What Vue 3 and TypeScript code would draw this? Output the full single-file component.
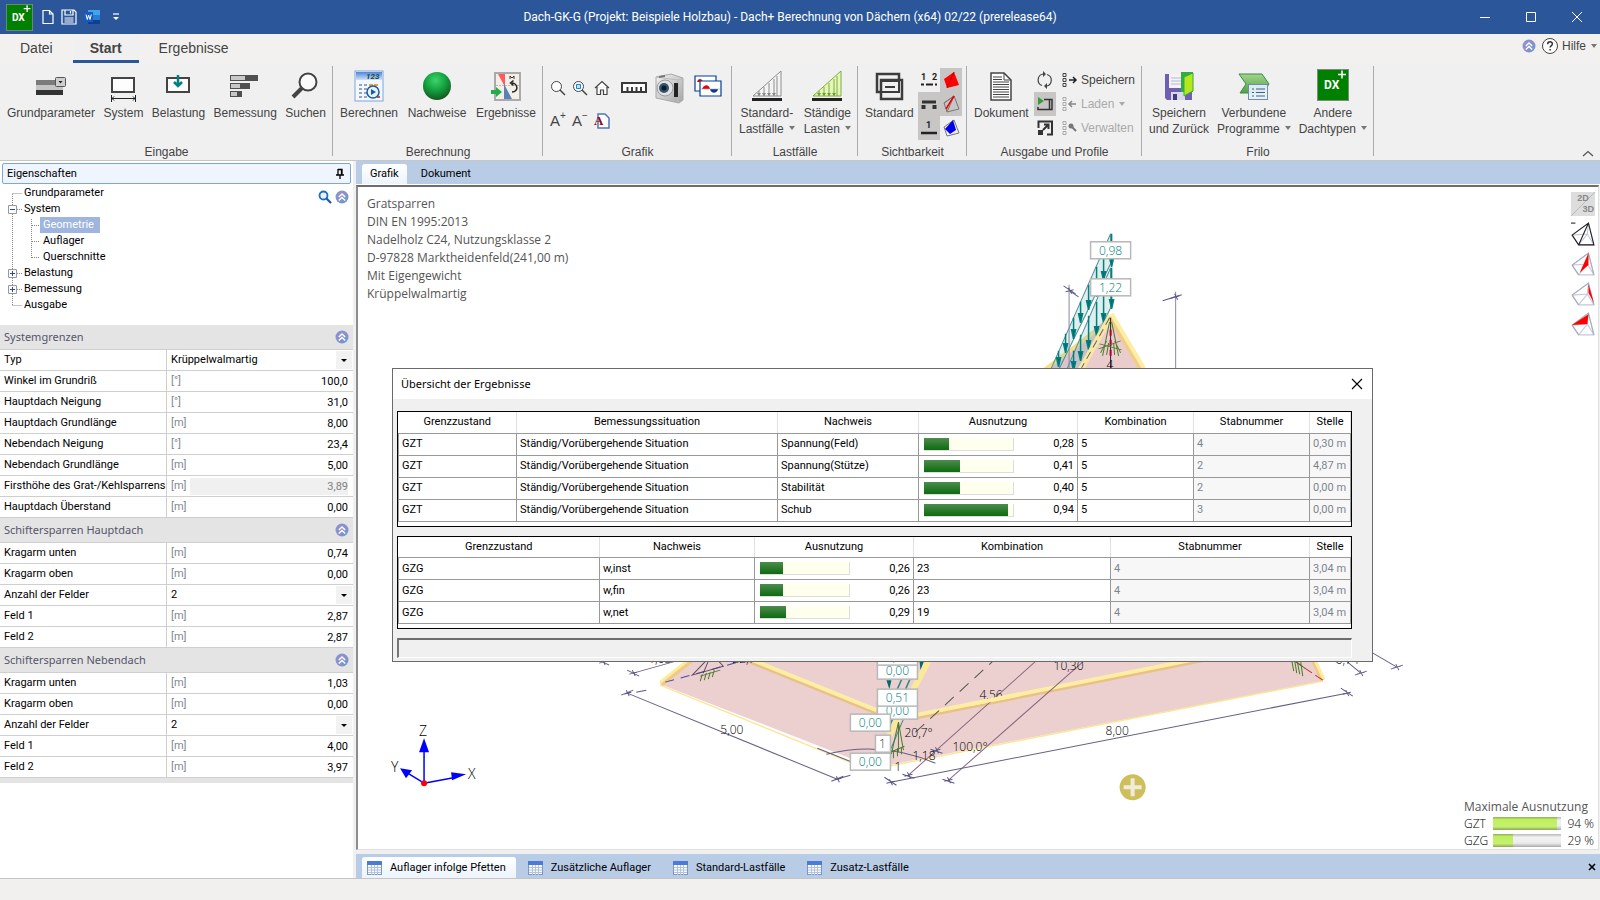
<script setup lang="ts">
import { ref } from 'vue'

interface Prop { label: string; unit?: string; value: string; kind?: 'select' | 'readonly' }
interface Section { title: string; rows: Prop[] }
interface Result { cells: string[]; use: number; combo: string; member: string; at: string }
interface Table { cls: string; heads: string[]; rows: Result[] }

const sections = ref<Section[]>([
  {
    title: 'Systemgrenzen',
    rows: [
      { label: 'Typ', value: 'Krüppelwalmartig', kind: 'select' },
      { label: 'Winkel im Grundriß', unit: '[°]', value: '100,0' },
      { label: 'Hauptdach Neigung', unit: '[°]', value: '31,0' },
      { label: 'Hauptdach Grundlänge', unit: '[m]', value: '8,00' },
      { label: 'Nebendach Neigung', unit: '[°]', value: '23,4' },
      { label: 'Nebendach Grundlänge', unit: '[m]', value: '5,00' },
      { label: 'Firsthöhe des Grat-/Kehlsparrens', unit: '[m]', value: '3,89', kind: 'readonly' },
      { label: 'Hauptdach Überstand', unit: '[m]', value: '0,00' },
    ],
  },
  {
    title: 'Schiftersparren Hauptdach',
    rows: [
      { label: 'Kragarm unten', unit: '[m]', value: '0,74' },
      { label: 'Kragarm oben', unit: '[m]', value: '0,00' },
      { label: 'Anzahl der Felder', value: '2', kind: 'select' },
      { label: 'Feld 1', unit: '[m]', value: '2,87' },
      { label: 'Feld 2', unit: '[m]', value: '2,87' },
    ],
  },
  {
    title: 'Schiftersparren Nebendach',
    rows: [
      { label: 'Kragarm unten', unit: '[m]', value: '1,03' },
      { label: 'Kragarm oben', unit: '[m]', value: '0,00' },
      { label: 'Anzahl der Felder', value: '2', kind: 'select' },
      { label: 'Feld 1', unit: '[m]', value: '4,00' },
      { label: 'Feld 2', unit: '[m]', value: '3,97' },
    ],
  },
])

const situation = 'Ständig/Vorübergehende Situation'
const tables: Table[] = [
  {
    cls: 'gzt',
    heads: ['Grenzzustand', 'Bemessungssituation', 'Nachweis', 'Ausnutzung', 'Kombination', 'Stabnummer', 'Stelle'],
    rows: [
      { cells: ['GZT', situation, 'Spannung(Feld)'], use: 0.28, combo: '5', member: '4', at: '0,30 m' },
      { cells: ['GZT', situation, 'Spannung(Stütze)'], use: 0.41, combo: '5', member: '2', at: '4,87 m' },
      { cells: ['GZT', situation, 'Stabilität'], use: 0.4, combo: '5', member: '2', at: '0,00 m' },
      { cells: ['GZT', situation, 'Schub'], use: 0.94, combo: '5', member: '3', at: '0,00 m' },
    ],
  },
  {
    cls: 'gzg',
    heads: ['Grenzzustand', 'Nachweis', 'Ausnutzung', 'Kombination', 'Stabnummer', 'Stelle'],
    rows: [
      { cells: ['GZG', 'w,inst'], use: 0.26, combo: '23', member: '4', at: '3,04 m' },
      { cells: ['GZG', 'w,fin'], use: 0.26, combo: '23', member: '4', at: '3,04 m' },
      { cells: ['GZG', 'w,net'], use: 0.29, combo: '19', member: '4', at: '3,04 m' },
    ],
  },
]
const fmt = (n: number): string => n.toFixed(2).replace('.', ',')

const info = ['Gratsparren', 'DIN EN 1995:2013', 'Nadelholz C24, Nutzungsklasse 2', 'D-97828 Marktheidenfeld(241,00 m)', 'Mit Eigengewicht', 'Krüppelwalmartig']
const bottomTabs = ['Auflager infolge Pfetten', 'Zusätzliche Auflager', 'Standard-Lastfälle', 'Zusatz-Lastfälle']
const limits = [{ name: 'GZT', pct: 94 }, { name: 'GZG', pct: 29 }]

// Load arrows: x, top, tip
const arrows: number[][] = [
  [1103, 252, 280], [1096, 267, 296], [1088, 285, 309], [1080, 302, 322], [1073, 318, 338], [1065, 334, 352], [1058, 351, 366],
  [1111, 234, 266], [1111, 268, 308], [1103, 284, 322], [1096, 302, 335], [1088, 316, 349], [1080, 335, 360], [1073, 351, 370],
]
const tags = [
  { x: 1090, y: 242, w: 40, t: '0,98' }, { x: 1090, y: 279, w: 40, t: '1,22' },
  { x: 877, y: 662, w: 40, t: '0,00' }, { x: 877, y: 648, w: 40, t: '0,63' },
  { x: 877, y: 702, w: 40, t: '0,00' }, { x: 877, y: 689, w: 40, t: '0,51' },
  { x: 850, y: 714, w: 40, t: '0,00' }, { x: 850, y: 753, w: 40, t: '0,00' },
]
// Dimension line ends: x, y and the slope of the tick
const ticks: number[][] = [[1069, 291, 5], [1175, 297, -2], [603, 662, 3], [633, 673, 3], [627, 693, -3], [837, 779, -3], [890, 782, 5], [908, 775, 1], [948, 780, 1], [936, 750, 1], [1346, 693, 5], [1360, 673, -2], [1396, 667, -2]]
const viewIcons = ['', 'M16 1 8 19l8-7z', 'M16 2l0 8 5 9z', 'M16 2 1 12l14-1z']
</script>

<template>
  <div class="app">
    <svg class="defs" aria-hidden="true">
      <defs>
        <linearGradient id="gBlue" x1="0" y1="0" x2="0" y2="1"><stop offset="0" stop-color="#4f86d8" /><stop offset="1" stop-color="#cfe2f8" /></linearGradient>
        <linearGradient id="gChevron" x1="0" y1="0" x2="1" y2="1"><stop offset="0" stop-color="#8d94d6" /><stop offset=".6" stop-color="#8a90c8" /><stop offset="1" stop-color="#4fa3dc" /></linearGradient>
        <radialGradient id="gBall" cx=".45" cy=".3" r=".75"><stop offset="0" stop-color="#3fd46c" /><stop offset=".5" stop-color="#11a03e" /><stop offset="1" stop-color="#1c4a1c" /></radialGradient>
        <linearGradient id="gGreen" x1="0" y1="0" x2="0" y2="1"><stop offset="0" stop-color="#a3d58a" /><stop offset="1" stop-color="#4fa04b" /></linearGradient>
        <linearGradient id="gCam" x1="0" y1="0" x2="1" y2="1"><stop offset="0" stop-color="#f4f4f4" /><stop offset="1" stop-color="#a5a5a5" /></linearGradient>
      </defs>
      <symbol id="chev" viewBox="0 0 14 14"><circle cx="7" cy="7" r="6.5" fill="url(#gChevron)" /><path d="M3.800 7 7 4l3.200 3M3.800 10.500 7 7.500l3.200 3" fill="none" stroke="#fff" stroke-width="1.400" /></symbol>
      <symbol id="grid" viewBox="0 0 15 14"><rect x=".5" y=".5" width="14" height="13" fill="#f7faff" stroke="#7d97c4" /><path d="M0 0h15v4H0z" fill="#4a7bd6" /><path d="M4.500 4v10M7.500 4v10M10.500 4v10M1 6.500h13M1 9h13M1 11.500h13" stroke="#b4c2dc" /></symbol>
      <symbol id="list" viewBox="0 0 14 14"><path d="M1 .5h3v3H1zM1 5.500h3v3H1zM1 10.500h3v3H1z" fill="none" stroke="currentColor" /></symbol>
    </svg>

    <header class="titlebar">
      <div class="quick">
        <svg class="appicon" viewBox="0 0 32 32"><rect x=".5" y=".5" width="31" height="31" fill="#008000" stroke="#7c8c7c" /><text x="7" y="20" class="dx">DX</text><path d="M25 1.500v8M21 5.500h8" stroke="#fff" stroke-width="1.500" /></svg>
        <button aria-label="Neu"><svg width="12" height="16" viewBox="0 0 12 16"><path d="M1 1.500h6.500l3.500 3.500v9.500H1zM7.500 1.500V5H11" fill="none" stroke="#fff" stroke-width="1.200" /></svg></button>
        <button aria-label="Speichern"><svg width="16" height="16" viewBox="0 0 16 16"><path d="M1 1h12l2 2v12H1zM4 1v5h8V1M9.500 2v2.500M3.500 9h9M3.500 11h9M3.500 13h9" fill="none" stroke="#fff" stroke-width="1.200" /></svg></button>
        <button aria-label="Word"><svg width="16" height="16" viewBox="0 0 16 16"><path d="M4 1h12v5H4z" fill="#41a5ee" /><path d="M4 6h12v5H4z" fill="#2b7cd3" /><path d="M4 11h12v4H4z" fill="#103f91" /><path d="M0 3h9v10H0z" fill="#185abd" /><path d="m2 5.500 1.300 5L4.600 6l1.400 4.500 1.300-5" fill="none" stroke="#fff" /></svg></button>
        <button class="more" aria-label="Anpassen"><svg width="8" height="8" viewBox="0 0 8 8"><path d="M1 1h6" stroke="#fff" stroke-width="1.200" /><path d="M1 4h6L4 7z" fill="#fff" /></svg></button>
      </div>
      <h1>Dach-GK-G (Projekt: Beispiele Holzbau) - Dach+ Berechnung von Dächern (x64) 02/22 (prerelease64)</h1>
      <div class="winbtns">
        <button aria-label="Minimieren"><svg viewBox="0 0 12 12"><path d="M1 6.500h10" /></svg></button>
        <button aria-label="Maximieren"><svg viewBox="0 0 12 12"><path d="M1.500 1.500h9v9h-9z" /></svg></button>
        <button aria-label="Schließen"><svg viewBox="0 0 12 12"><path d="m1 1 10 10M11 1 1 11" /></svg></button>
      </div>
    </header>

    <nav class="menu">
      <button>Datei</button><button class="on">Start</button><button>Ergebnisse</button>
      <div class="help">
        <svg width="14" height="14"><use href="#chev" /></svg>
        <button><svg width="18" height="18" viewBox="0 0 18 18"><circle cx="9" cy="9" r="7.500" fill="#fff" stroke="#444" /><path d="M6.700 7.200c0-3.300 4.800-3.100 4.700-.2 0 1.600-2.300 1.700-2.300 3.600M9.100 12v1.600" fill="none" stroke="#333" stroke-width="1.500" /></svg>Hilfe<i class="caret"></i></button>
      </div>
    </nav>

    <div class="ribbon">
      <section class="g g1">
        <div class="tools">
          <button class="big"><svg viewBox="0 0 32 32"><path d="M1 11h27v5H1z" fill="#7b7b7b" /><path d="M1 16h27v5H1z" fill="#c4c4c4" /><path d="M1 21h27v5H1z" fill="#333" /><rect x="20.500" y="8.500" width="10" height="9" rx="1" fill="#cfcfcf" stroke="#555" /><path d="M23.500 12h4l-2 2.500z" fill="#222" /></svg>Grundparameter</button>
          <button class="big"><svg viewBox="0 0 32 32"><path d="M5 9h22v14H5z" fill="#fdfdfd" stroke="#444" stroke-width="2" /><path d="M4 29.500h25M4.500 26v7M28.500 26v7M7 27.500l-2 2 2 2M26 27.500l2 2-2 2" fill="none" stroke="#222" /></svg>System</button>
          <button class="big"><svg viewBox="0 0 32 32"><path d="M5 9h22v14H5z" fill="#fdfdfd" stroke="#444" stroke-width="2" /><path d="M16 6v11M12 13l4 4 4-4" fill="none" stroke="#008080" stroke-width="2.500" /></svg>Belastung</button>
          <button class="big"><svg viewBox="0 0 32 32"><path d="M1 6h28v6H1zM1 14h20v6H1zM1 22h12v6H1z" fill="#505050" /><path d="M2 7h14v4H2zM2 15h9v4H2zM2 23h6v4H2z" fill="#c8c8c8" /></svg>Bemessung</button>
          <button class="big"><svg viewBox="0 0 32 32"><circle cx="18" cy="13" r="8.500" fill="#fafafa" stroke="#444" stroke-width="2" /><path d="m12 19-9 9" stroke="#444" stroke-width="4" /></svg>Suchen</button>
        </div><h2>Eingabe</h2>
      </section>
      <section class="g g2">
        <div class="tools">
          <button class="big"><svg viewBox="0 0 32 32"><rect x="2" y="2" width="28" height="30" fill="#f3f8ff" stroke="#7fa5da" /><path d="M3 3h26v8H3z" fill="url(#gBlue)" /><text x="13" y="10" font-size="8" font-style="italic" font-weight="700" fill="#244" font-family="Roboto, sans-serif">123</text><path d="M6 15h3v2H6zm5 0h3v2h-3zM6 19h3v2H6zm5 0h3v2h-3zM6 23h3v2H6zm5 0h3v2h-3zM6 27h3v2H6zm5 0h3v2h-3z" fill="#94a5c4" /><path d="M16 15h4v2h-4zm5 0h4v2h-4z" fill="#e5a345" /><path d="M24 27h3v2h-3z" fill="#d8543a" /><circle cx="20" cy="23" r="6" fill="#e6f1fc" stroke="#1a5c9e" stroke-width="1.500" /><path d="m18 20 5 3-5 3z" fill="#1a5c9e" /></svg>Berechnen</button>
          <button class="big"><svg viewBox="0 0 32 32"><circle cx="16" cy="17" r="14" fill="url(#gBall)" /></svg>Nachweise</button>
          <button class="big"><svg viewBox="0 0 32 32"><rect x="5" y="4" width="25" height="27" fill="#f3efe6" stroke="#aaa" stroke-width="2" /><path d="M8 5h7v13z" fill="#ff5a5f" /><path d="M14 15v15h8z" fill="#5b82b5" /><path d="M6 16.500h23" stroke="#bbb" stroke-dasharray="2 1" /><path d="M22 23c7 0 6-9 0-9M23.500 11.500l-3 2.500 3 2.500" fill="none" stroke="#222" stroke-width="1.500" /><path d="M20 10V7l2 2 2-2v3" fill="none" stroke="#333" /><path d="M1 21h5v-3l6 5-6 5v-3H1z" fill="#22ad4a" /></svg>Ergebnisse</button>
        </div><h2>Berechnung</h2>
      </section>
      <section class="g g3">
        <div class="gfx">
          <div class="gfxrow">
            <button aria-label="Zoom"><svg width="16" height="16" viewBox="0 0 16 16"><circle cx="6.500" cy="6.500" r="5" fill="#fff" stroke="#444" /><path d="m10 10 5 5" stroke="#444" stroke-width="1.500" /></svg></button>
            <button aria-label="Ausschnitt"><svg width="16" height="16" viewBox="0 0 16 16"><circle cx="6.500" cy="6.500" r="5" fill="#fff" stroke="#444" /><path d="M4.500 4.500h4v4h-4z" fill="#bfe2ff" stroke="#1684cf" /><path d="m10 10 5 5" stroke="#444" stroke-width="1.500" /></svg></button>
            <button aria-label="Gesamtansicht"><svg width="16" height="16" viewBox="0 0 16 16"><path d="M1 8 8 1.500 15 8M3 7v7.500h3.500V10h3v4.500H13V7" fill="#fff" stroke="#444" stroke-width="1.200" /></svg></button>
            <button class="ruler" aria-label="Maßlinien"><svg width="28" height="14" viewBox="0 0 28 14"><path d="M2 2h24v9H2z" fill="#fff" stroke="#3a3a3a" stroke-width="2" /><path d="M7.500 6v5M12 6v5M16.500 6v5M21 6v5" stroke="#3a3a3a" stroke-width="2" /></svg></button>
            <button aria-label="Kamera"><svg width="32" height="32" viewBox="0 0 32 32"><path d="M2 5 17 2l12 4v22l-4 3L2 26z" fill="url(#gCam)" stroke="#aaa" /><path d="M2 5 24 8v22M24 8l5-2" fill="none" stroke="#bbb" /><path d="m5 4 6-1v2L5 6z" fill="#777" /><circle cx="11" cy="16" r="8" fill="#e2e2e2" stroke="#999" /><circle cx="10" cy="16" r="5" fill="#35556e" /><circle cx="10" cy="16" r="2.500" fill="#0b1a28" /><path d="M20 11h4v14h-4z" fill="#222" /></svg></button>
            <button class="pics" aria-label="Bilder"><svg width="28" height="22" viewBox="0 0 28 22"><path d="M1 1h21v15H1z" fill="#fff" stroke="#063c96" stroke-width="1.200" /><path d="M3 7c1-4 5-4 6 0z" fill="#e00" /><path d="M6 6h21v15H6z" fill="#fff" stroke="#063c96" stroke-width="1.200" /><path d="M8 14c2-5 7-5 8 0z" fill="#e00" /><path d="M16 14c1 5 7 5 8 0z" fill="#063c96" /><path d="M7 14h19" stroke="#aaa" stroke-width=".6" /></svg></button>
          </div>
          <div class="gfxrow low">
            <button class="fs">A<sup>+</sup></button><button class="fs">A<sup>−</sup></button>
            <button aria-label="Schrift"><svg width="16" height="16" viewBox="0 0 16 16"><path d="M4 1h7l4 4v10H4z" fill="#fff" stroke="#5274b5" stroke-width="1.500" /><text x="0" y="12" font-size="13" font-weight="700" font-family="'Liberation Serif', serif" fill="#8b0a14">A</text></svg></button>
          </div>
        </div><h2>Grafik</h2>
      </section>
      <section class="g g4">
        <div class="tools">
          <button class="big"><svg viewBox="0 0 32 32"><path d="M2 27 30 2v25zM8 22v5M13 18v9M18 14v13M23 10v17M26 7v20" fill="#f3f3f3" stroke="#8d8d8d" /><path d="M1 29h30v3H1z" fill="#222" /><path d="m6 24 2 3 2-3zm5 0 2 3 2-3zm5 0 2 3 2-3zm5 0 2 3 2-3z" fill="#888" /></svg>Standard-<span>Lastfälle<i class="caret"></i></span></button>
          <button class="big"><svg viewBox="0 0 32 32"><path d="M2 27 30 2v25zM8 22v5M13 18v9M18 14v13M23 10v17M26 7v20" fill="#e4f7b8" stroke="#7fae3e" /><path d="M1 29h30v3H1z" fill="#222" /><path d="m6 24 2 3 2-3zm5 0 2 3 2-3zm5 0 2 3 2-3zm5 0 2 3 2-3z" fill="#6e9b34" /></svg>Ständige<span>Lasten<i class="caret"></i></span></button>
        </div><h2>Lastfälle</h2>
      </section>
      <section class="g g5">
        <div class="tools">
          <button class="big"><svg viewBox="0 0 32 32"><path d="M4 5h22v18H4z" fill="none" stroke="#3c3c3c" stroke-width="2.500" /><path d="M8 11h21v19H8z" fill="#f0f0f0" stroke="#3c3c3c" stroke-width="2.500" /><path d="M8 12h18v11H8z" fill="none" stroke="#3c3c3c" stroke-width="2" /><path d="M12 18h10" stroke="#3c3c3c" stroke-width="2" /></svg>Standard</button>
          <div class="toggles">
            <button aria-label="Nummern"><svg viewBox="0 0 22 22"><text x="3" y="11" font-size="9" font-weight="700" font-family="Roboto, sans-serif" fill="#222">1</text><text x="14" y="11" font-size="9" font-weight="700" font-family="Roboto, sans-serif" fill="#222">2</text><path d="M3 15.500h3m2 0h7m2 0h2" stroke="#222" stroke-width="2" /></svg></button>
            <button class="on" aria-label="Dachfläche"><svg viewBox="0 0 22 22"><path d="M4 10 14 3l5 13-12 3z" fill="#f00" /><path d="m14 3-7 16" stroke="#b00" /></svg></button>
            <button class="on" aria-label="Auflager"><svg viewBox="0 0 22 22"><path d="M4 9h14" stroke="#333" stroke-width="3" /><path d="M3.500 12v4h4v-4zM14.500 12v4h4v-4z" fill="#333" /></svg></button>
            <button class="on" aria-label="Drahtmodell"><svg viewBox="0 0 22 22"><path d="M4 10 14 3l5 13-12 3zM4 10l10-7M7 19l7-16" fill="none" stroke="#777" /><path d="M14 3 6 16" stroke="#e00" stroke-width="1.500" /></svg></button>
            <button class="on" aria-label="Stabnummer"><svg viewBox="0 0 22 22"><text x="8" y="11" font-size="9" font-weight="700" font-family="Roboto, sans-serif" fill="#222">1</text><path d="M3 16h16" stroke="#222" stroke-width="2.500" /></svg></button>
            <button aria-label="Schnitt"><svg viewBox="0 0 22 22"><path d="M4 10 14 3l5 13-12 3z" fill="none" stroke="#777" /><path d="M13 3 5 12l5 5 6-4z" fill="#00e" /></svg></button>
          </div>
        </div><h2>Sichtbarkeit</h2>
      </section>
      <section class="g g6">
        <div class="tools">
          <button class="big"><svg viewBox="0 0 32 32"><path d="M6 4h13l7 7v20H6z" fill="#fff" stroke="#444" stroke-width="1.500" /><path d="M19 4v7h7M8 8h9M8 10.500h9M8 13h16M8 15.500h16M8 18h16M8 20.500h16M8 23h16M8 25.500h16M8 28h16" fill="none" stroke="#444" /></svg>Dokument</button>
          <div class="minis">
            <button aria-label="Aktualisieren"><svg viewBox="0 0 22 22"><path d="M8 16.500A6 6 0 0 1 9 5M13 5.500A6 6 0 0 1 13 17" fill="none" stroke="#444" stroke-width="1.200" /><path d="m9 2 3 3-3 3zM13 14l-3 3 3 3z" fill="#444" /></svg></button>
            <button class="on" aria-label="Ausgabe"><svg viewBox="0 0 22 22"><path d="M10 6.500h8v10H4V14M15.500 7v9" fill="none" stroke="#333" stroke-width="1.500" /><path d="M4 4v8l6-4z" fill="#3a9a3a" /></svg></button>
            <button aria-label="Maximieren"><svg viewBox="0 0 22 22"><path d="M4.500 11V4.500H18v13h-5" fill="none" stroke="#333" stroke-width="2" /><path d="M4 13h5v5H4z" fill="#333" /><path d="m9 13 5-5M10 7.500h4.500V12" fill="none" stroke="#333" stroke-width="2" /></svg></button>
          </div>
          <div class="profiles">
            <button><svg viewBox="0 0 16 16"><use href="#list" width="14" height="14" y="1" /><path d="M7 8h7M11 5l3 3-3 3" fill="none" stroke="#222" stroke-width="1.500" /></svg>Speichern</button>
            <button disabled><svg viewBox="0 0 16 16"><use href="#list" width="14" height="14" y="1" /><path d="M14 8H7M10 5 7 8l3 3" fill="none" stroke="#888" stroke-width="1.500" /></svg>Laden<i class="caret"></i></button>
            <button disabled><svg viewBox="0 0 16 16"><use href="#list" width="14" height="14" y="1" /><path d="M9 6l5 5" stroke="#777" stroke-width="2" /><circle cx="9" cy="6" r="2.500" fill="#777" /></svg>Verwalten</button>
          </div>
        </div><h2>Ausgabe und Profile</h2>
      </section>
      <section class="g g7">
        <div class="tools">
          <button class="big"><svg viewBox="0 0 32 32"><path d="M2 5h27v26H4l-2-2z" fill="#6f5fb0" /><path d="M6 5h17v14H6z" fill="#f2f2f8" /><path d="M8 9h13M8 12h13M8 15h13" stroke="#b9b9cc" /><path d="M8 23h14v8H8z" fill="#d8d8e8" /><path d="M10 25h4v6h-4z" fill="#453a80" /><path d="M18 3h12v20H18z" fill="#2fae3d" /><path d="m21 8 9-4v18l-9 5z" fill="#b6e61d" stroke="#2fae3d" /></svg>Speichern<span>und Zurück</span></button>
          <button class="big"><svg viewBox="0 0 32 32"><path d="M1 5h23l7 10-6 9H2l6-9z" fill="url(#gGreen)" stroke="#3d8a45" /><rect x="10.500" y="15.500" width="19" height="15" fill="#e8f1fa" fill-opacity=".92" stroke="#6d8db8" /><path d="M14 20h2m2 0h9M14 23.500h2m2 0h9M14 27h2m2 0h9" stroke="#3e5f94" /></svg>Verbundene<span>Programme<i class="caret"></i></span></button>
          <button class="big"><svg viewBox="0 0 32 32"><rect x=".5" y=".5" width="31" height="31" fill="#008000" stroke="#7c8c7c" /><text x="7" y="20" class="dx">DX</text><path d="M25 1.500v8M21 5.500h8" stroke="#fff" stroke-width="1.500" /></svg>Andere<span>Dachtypen<i class="caret"></i></span></button>
        </div><h2>Frilo</h2>
      </section>
      <button class="collapse" aria-label="Menüband einklappen"><svg width="12" height="7" viewBox="0 0 12 7"><path d="m1 6 5-4.500L11 6" fill="none" stroke="#555" stroke-width="1.300" /></svg></button>
    </div>

    <main class="work">
      <aside class="side">
        <div class="panelhead">Eigenschaften<svg width="10" height="12" viewBox="0 0 10 12"><path d="M3 1.500h4V7M3 1v6M6.500 1v6M1 7h8M5 7v4" fill="none" stroke="#000" stroke-width="1.300" /></svg></div>
        <div class="treebox">
          <svg class="lines" width="44" height="128" viewBox="0 0 44 128" aria-hidden="true">
            <path d="M12.500 9v112M12.500 8.500H22M17 24.500h5M31.500 34v39M32 40.500h8M32 56.500h8M32 72.500h8M17 88.500h5M17 104.500h5M12.500 120.500H22" fill="none" stroke="#888" stroke-dasharray="1 1" />
            <path d="M8.500 20.500h8v8h-8zM8.500 84.500h8v8h-8zM8.500 100.500h8v8h-8z" fill="#fafafa" stroke="#999" />
            <path d="M10 24.500h5M10 88.500h5M12.500 86v5M10 104.500h5M12.500 102v5" stroke="#2a4a9a" />
          </svg>
          <ul class="tree">
            <li>Grundparameter</li><li>System
              <ul><li><span class="sel">Geometrie</span></li><li>Auflager</li><li>Querschnitte</li></ul></li>
            <li>Belastung</li><li>Bemessung</li><li>Ausgabe</li>
          </ul>
          <div class="treeicons">
            <svg width="14" height="14" viewBox="0 0 14 14"><circle cx="5.500" cy="5.500" r="4" fill="#e4f4fc" stroke="#1f6dbb" stroke-width="1.800" /><path d="m8.500 8.500 4.500 4.500" stroke="#1f5a9e" stroke-width="2.200" /></svg>
            <svg width="14" height="14"><use href="#chev" /></svg>
          </div>
        </div>
        <section v-for="(s, si) in sections" :key="s.title" class="props">
          <h3>{{ s.title }}<svg width="14" height="14"><use href="#chev" /></svg></h3>
          <div v-for="(r, ri) in s.rows" :key="ri" class="prop">
            <label :for="`p${si}-${ri}`">{{ r.label }}</label>
            <div class="val">
              <template v-if="r.kind === 'select'">
                <select :id="`p${si}-${ri}`"><option>{{ r.value }}</option></select>
                <span class="drop"></span>
              </template>
              <template v-else>
                <span class="unit">{{ r.unit }}</span>
                <input :id="`p${si}-${ri}`" v-model="r.value" :readonly="r.kind === 'readonly'" type="text">
              </template>
            </div>
          </div>
        </section>
        <div class="strip"></div>
      </aside>

      <div class="view">
        <div class="tabs top"><button class="on">Grafik</button><button>Dokument</button></div>
        <div class="canvas">
          <svg class="drawing" viewBox="358 187 1239 662" preserveAspectRatio="xMidYMid slice">
            <!-- roof faces -->
            <path d="M660 684 700 654h612l10 27-434 84-28-3z" fill="#ecd0d0" />
            <path d="M1110 316 1142 370h-98l50-38z" fill="#ebcccc" />
            <path d="M1110 316 1044 370h36z" fill="#ddc3cb" />
            <path d="M1044 370 1094 332" stroke="#f6dd8a" stroke-width="4" />
            <g fill="#7fbfbb" fill-opacity=".25" stroke="#4a8f92">
              <path d="M1110 234 1050 370h8l52-106z" /><path d="M1110 268 1066 370h14l30-62z" />
            </g>
            <g stroke="#008080" stroke-width="1.500" fill="#006b6b">
              <path v-for="(a, i) in arrows" :key="i" :d="`M${a[0]} ${a[1]}V${a[2] - 8}m-2 0h4l-2 9z`" />
            </g>
            <path d="M1110 316 1080 370" stroke="#fbe7a1" stroke-width="6" />
            <path d="M1110 317 1143 372" stroke="#f0cd86" stroke-width="6" />
            <path d="M1111 314 1143 368" stroke="#fdeea4" stroke-width="4" />
            <path d="m1109 318-28 50" stroke="#567" stroke-dasharray="8 5" />
            <path d="M1110 318v52" stroke="#222" /><path d="M1110 330v30" stroke="#b00035" stroke-width="2" stroke-dasharray="6 4" />
            <path d="m1109 322-7 34M1111 322l7 34M1099 344l22 6M1098 349l22-8M1100 353l6-12M1106 355l2-12M1114 355l-1-12M1120 353l-6-12" fill="none" stroke="#4d7a2e" />
            <text x="1106" y="369" font-size="12">4</text>
            <!-- lower eaves -->
            <path d="M660 685 852 763M888 766l434-85" stroke="#fbe69b" stroke-width="1.500" />
            <path d="M661 684 700 653M1322 680l-14-30" stroke="#f0c983" stroke-width="5" />
            <path d="M660 682 698 652M1323 679l-14-30" stroke="#fdeb9e" stroke-width="3" />
            <path d="m745 659 131 53M915 717l300-60" stroke="#e8c284" stroke-width="5" />
            <path d="m745 657 131 53M915 715l300-60" stroke="#fdeea4" stroke-width="4" />
            <g stroke="#675f80" fill="none">
              <path d="M817 748 852 762" />
              <path d="M826 754q56-14 109 9" />
              <path d="M908 775 1042 655M948 780 1090 655" stroke="#8a6680" />
              <path d="M627 693 837 779M890 782 1346 693M633 673 690 657M1350 640 1396 667M1330 648 1360 673M1335 662l9-2" />
              <path d="M1068.500 285v90M1175 292v80" stroke="#8886ab" />
            </g>
            <path d="M915 732 1000 654" stroke="#555" stroke-dasharray="12 8" />
            <path d="M665 682 760 656" stroke="#4a46b4" stroke-dasharray="9 7" />
            <path d="M1322 680 1292 660" stroke="#b33" stroke-dasharray="9 4" />
            <g fill="none">
              <path d="M692 675 712 654l11 12zM703 673l8-19" stroke="#5b4a67" />
              <path d="m700 676 20-6M702 674l-2 7m6-8-2 7m6-8-2 7m6-9-2 7M1290 655l3 16m0-16 3 18m0-14 3 15m1-12 2 14M1288 656l16 12" stroke="#4d7a2e" />
            </g>
            <path d="M884 764 930 655" stroke="#3a8a8a" /><path d="M889 735 931 655" stroke="#fbe99a" stroke-width="6" />
            <path d="M884 718 912 655M889 726 920 655" stroke="#2a8a8a" stroke-width="1.500" /><path d="m886 680 5 0-2 9zM919 660l5 0-4 10z" fill="#006b6b" />
            <path d="m898 722-7 32M898 722l5 28M898 722v30M890 752l14-6M893 750v8m4-10v8m4-9v7" fill="none" stroke="#4d7a2e" />
            <g stroke="#5a5888"><path v-for="(t, i) in ticks" :key="i" :d="`M${t[0] - 6} ${t[1] + (t[2] < 0 ? 2 : -t[2])}L${t[0] + 6} ${t[1] + (t[2] < 0 ? t[2] : 3)}M${t[0] - 4} ${t[1] + 1}l8-2m-5-2 3 6`" /></g>
            <path d="m1069 291 9 6M1162 301l16-5M646 690l-10 2M836 779l14-4" stroke="#5a5888" />
            <g font-size="12" class="dim">
              <text x="720" y="734">5,00</text><text x="1105" y="735">8,00</text><text x="904" y="737">20,7°</text><text x="952" y="751">100,0°</text>
              <text x="912" y="760">1,18</text><text x="979" y="699">4,56</text><text x="1053" y="670">10,30</text><text x="648" y="663">1,03</text>
              <text x="732" y="663">22,7</text><text x="1335" y="664">0,74</text><text x="894" y="771">1</text>
            </g>
            <path d="m970 704 50-10" stroke="#fdeea4" stroke-width="4" />
            <g class="tag">
              <template v-for="(t, i) in tags" :key="i">
                <rect :x="t.x" :y="t.y" :width="t.w" height="17" /><text :x="t.x + t.w / 2" :y="t.y + 13">{{ t.t }}</text>
              </template>
              <rect x="875" y="735" width="15" height="17" /><text x="882" y="748" class="dark">1</text>
            </g>
            <!-- coordinate axes -->
            <path d="M424 783V750M424 783l-18-11M424 783l32-6" stroke="#00f" stroke-width="1.500" />
            <path d="m424 738 5 14h-10zM400 768l12 2-6 8zM466 774l-14 6-1-8z" fill="#00f" /><circle cx="424" cy="783" r="3" fill="#f00" />
            <g font-size="14" class="dim"><text x="419" y="736">Z</text><text x="391" y="772">Y</text><text x="468" y="779">X</text></g>
            <circle cx="1132" cy="787" r="13" fill="#cfbf5c" /><path d="M1132 778v18M1123 787h18" stroke="#f0ecdc" stroke-width="4" />
          </svg>
          <div class="info"><p v-for="l in info" :key="l">{{ l }}</p></div>
          <div class="viewtools">
            <button class="flat"><span>2D</span><span>3D</span></button>
            <button v-for="(d, i) in viewIcons" :key="i" :aria-label="`Ansicht ${i + 1}`"><svg viewBox="0 0 22 22"><path d="M1 12 16 1l5 20H7zM1 12l14-1 6 10M7 21 15 11l1-10" fill="none" stroke="#c4c8dc" /><path v-if="!d" d="M1 12 16 1l5 20H7zM16 1 7 21" fill="none" stroke="#222" /><path v-else d="M1 12 16 1l5 20M1 12l6 9" fill="none" stroke="#aab" /><path v-if="d" :d="d" fill="#f00" /><path v-else d="M0 1h4" stroke="#222" /></svg></button>
          </div>
          <div class="usage">
            <p>Maximale Ausnutzung</p>
            <div v-for="l in limits" :key="l.name" class="limit"><span>{{ l.name }}</span><div class="meter"><div :style="{ width: l.pct + '%' }"></div></div><span class="pct">{{ l.pct }} %</span></div>
          </div>
        </div>
        <div class="tabs bottom">
          <button v-for="(t, i) in bottomTabs" :key="t" :class="{ on: i === 0 }"><svg width="15" height="14"><use href="#grid" /></svg>{{ t }}</button>
          <button class="x" aria-label="Schließen"><svg width="8" height="8" viewBox="0 0 8 8"><path d="m1 1 6 6M7 1 1 7" stroke="#000" stroke-width="1.600" /></svg></button>
        </div>
      </div>
    </main>
    <footer class="status"></footer>

    <div class="dialog" role="dialog" aria-labelledby="dlg">
      <div class="dhead"><h2 id="dlg">Übersicht der Ergebnisse</h2><button aria-label="Schließen"><svg width="12" height="12" viewBox="0 0 12 12"><path d="m1 1 10 10M11 1 1 11" stroke="#000" stroke-width="1.100" /></svg></button></div>
      <div class="dbody">
        <div v-for="t in tables" :key="t.cls" class="frame">
          <table :class="t.cls">
            <thead><tr><th v-for="h in t.heads" :key="h" scope="col">{{ h }}</th></tr></thead>
            <tbody>
              <tr v-for="(r, i) in t.rows" :key="i">
                <td v-for="(c, j) in r.cells" :key="j">{{ c }}</td>
                <td><div class="use"><div class="bar"><div :style="{ width: r.use * 100 + '%' }"></div></div><span>{{ fmt(r.use) }}</span></div></td>
                <td>{{ r.combo }}</td><td class="off">{{ r.member }}</td><td class="off">{{ r.at }}</td>
              </tr>
            </tbody>
          </table>
        </div>
        <div class="sunken"></div>
      </div>
    </div>
  </div>
</template>

<style>
body { margin: 0; }
</style>

<style scoped>
.app { position: relative; display: flex; flex-direction: column; height: 100vh; min-width: 1400px; overflow: hidden; background: #f0f0f0; color: #000; font: 11px/16px Roboto, "Liberation Sans", sans-serif; }
.app *, .app *::before { box-sizing: border-box; }
button, input, select { font: inherit; color: inherit; border: 0; padding: 0; margin: 0; background: none; }
h1, h2, h3, p, ul { margin: 0; padding: 0; font-weight: 400; font-size: inherit; }
svg { display: block; flex: none; }
.defs { position: absolute; width: 0; height: 0; }
.dx { font: 700 12px Roboto, sans-serif; fill: #fff; }
.caret { display: inline-block; border: 3px solid transparent; border-top: 4px solid #777; border-bottom: 0; margin-left: 5px; vertical-align: 3px; }

.titlebar { display: grid; grid-template-columns: 1fr auto 1fr; align-items: center; height: 34px; flex: none; background: #2b579a; color: #fff; }
.titlebar h1 { font: 12px/16px Roboto, sans-serif; margin-right: 20px; }
.quick { display: flex; align-items: center; gap: 7px; padding-left: 6px; }
.quick button { display: flex; }
.quick .more { margin-left: 5px; }
.appicon { width: 27px; height: 27px; margin-right: 2px; }
.winbtns { display: flex; justify-content: flex-end; gap: 34px; padding-right: 17px; }
.winbtns svg { width: 12px; height: 12px; fill: none; stroke: #fff; }

.menu { display: flex; height: 29px; flex: none; background: #f3f1ef; color: #444; font: 14px/28px "Liberation Sans", sans-serif; }
.menu > button { padding: 0 20px; border-bottom: 3px solid transparent; }
.menu > button.on { font-weight: 700; padding: 0 17px; background: #f0f0f0; border-color: #2b579a; }
.help { margin-left: auto; display: flex; align-items: center; gap: 5px; padding: 0 3px 5px 0; font-size: 12px; line-height: 20px; }
.help button { display: flex; align-items: center; gap: 3px; }
.help .caret { margin-left: 2px; }

.ribbon { display: flex; flex: none; height: 98px; border-bottom: 1px solid #c6c6c6; background: #f0f0f0; color: #444; font: 12px/16px "Liberation Sans", sans-serif; }
.g { display: flex; flex-direction: column; justify-content: space-between; padding: 5px 7px 0; flex: none; background: linear-gradient(#ababab, #ababab) right 3px / 1px 90px no-repeat; }
.g h2 { text-align: center; line-height: 16px; }
.g1 { width: 333px; } .g2 { width: 210px; } .g3 { width: 189px; } .g4 { width: 126px; } .g5 { width: 109px; } .g6 { width: 175px; } .g7 { width: 232px; }
.tools { display: flex; justify-content: space-between; }
.big { display: flex; flex-direction: column; align-items: center; white-space: nowrap; }
.big svg { width: 32px; height: 34px; margin-bottom: 3px; overflow: visible; }
.gfxrow { display: flex; align-items: center; gap: 6px; height: 40px; }
.gfxrow.low { height: 26px; }
.gfxrow button { display: flex; }
.gfxrow .ruler { margin-left: 4px; }
.gfxrow .pics { margin-left: 2px; margin-bottom: 4px; }
.gfxrow .fs { font-size: 15px; width: 16px; line-height: 18px; }
.fs sup { font-size: 10px; line-height: 8px; }
.toggles { display: grid; grid-template-columns: 22px 22px; grid-auto-rows: 24px; margin-right: -2px; }
.toggles button, .minis button { display: flex; align-items: center; justify-content: center; width: 22px; height: 24px; }
.toggles svg, .minis svg { width: 22px; height: 22px; }
.toggles .on, .minis .on { background: #c8c6c4; }
.minis { display: grid; grid-auto-rows: 24px; }
.profiles { display: grid; grid-auto-rows: 24px; }
.profiles button { display: flex; align-items: center; gap: 3px; color: #444; }
.profiles button:disabled { color: #aaa; }
.profiles .caret { border-top-color: #aaa; margin-left: 2px; }
.profiles svg { width: 16px; height: 16px; }
.collapse { margin: auto 6px 3px auto; }

.work { display: flex; flex: 1; min-height: 0; }
.side { width: 353px; flex: none; background: #fff; overflow: hidden; }
.panelhead { display: flex; justify-content: space-between; align-items: center; height: 21px; margin: 2px 2px 1px; padding: 0 5px 0 4px; border: 1px solid #7ea6dc; border-radius: 2px; background: #eef5fe; }
.treebox { position: relative; display: flex; justify-content: space-between; height: 140px; }
.lines { position: absolute; left: 0; top: 0; }
.tree, .tree ul { list-style: none; }
.tree { padding-left: 24px; }
.tree ul { padding-left: 19px; }
.sel { display: inline-block; background: #9fb5dd; color: #fff; margin-left: -3px; padding: 0 6px 0 3px; }
.treeicons { position: relative; display: flex; gap: 3px; padding: 5px 4px; }
.props h3 { display: flex; justify-content: space-between; align-items: center; height: 25px; padding: 0 4px; background: #e4e4e4; border-bottom: 1px solid #cfcfcf; color: #55556a; font: 11px/24px "Noto Sans", sans-serif; }
.prop { display: grid; grid-template-columns: 166px 1fr; height: 21px; border-bottom: 1px solid #cfcfcf; }
.prop label { padding-left: 4px; line-height: 20px; white-space: nowrap; }
.val { display: flex; align-items: center; border-left: 1px solid #cfcfcf; padding-left: 4px; min-width: 0; }
.val input { flex: 1; min-width: 0; height: 17px; margin: 0 5px 0 4px; text-align: right; }
.val input[readonly] { background: #f0f0f0; color: #808080; }
.unit { color: #808890; }
.val select { flex: 1; appearance: none; height: 18px; }
.drop { display: flex; align-items: center; justify-content: center; width: 16px; height: 18px; margin-right: 1px; background: #f2f2f2; pointer-events: none; }
.drop::before { content: ""; border: 3px solid transparent; border-top-color: #000; border-bottom: 0; }
.strip { height: 5px; background: #e4e4e4; }

.view { flex: 1; display: flex; flex-direction: column; min-width: 0; padding-left: 3px; }
.tabs { display: flex; flex: none; height: 24px; padding: 3px 4px 0 6px; background: #b9cce6; }
.tabs button { display: flex; align-items: center; padding: 0 8px; border-radius: 3px 3px 0 0; }
.tabs .on { background: linear-gradient(#fff, #ecf4fd); }
.tabs.top { border-bottom: 1px solid #fff; }
.tabs.top button + button { margin-left: 6px; }
.tabs.bottom button { gap: 8px; padding: 0 10px 0 5px; margin-right: 7px; }
.tabs.bottom .x { margin-left: auto; margin-right: 0; padding: 0 0 2px; }
.canvas { position: relative; flex: 1; min-height: 0; margin: 0 1px 4px 0; background: #fff; border: 1px solid #e0e0e0; border-top: 2px solid #6d6d6d; border-left: 2px solid #8d8d8d; font-family: "Open Sans", "Noto Sans", sans-serif; }
.drawing { position: absolute; inset: 0; width: 100%; height: 100%; }
.drawing text { font-family: "Open Sans", "Noto Sans", sans-serif; font-weight: 300; }
.tag rect { fill: #fff; stroke: #b8b8b8; stroke-width: 1.5; }
.tag text { fill: #007c7c; font-size: 12px; text-anchor: middle; }
.tag .dark { fill: #333; }
.info { position: absolute; left: 9px; top: 8px; font-size: 12px; line-height: 18px; font-weight: 300; color: #555; }
.viewtools { position: absolute; right: 3px; top: 5px; display: flex; flex-direction: column; gap: 6px; }
.viewtools button { display: block; width: 24px; height: 24px; }
.viewtools svg { width: 24px; height: 24px; }
.viewtools .flat { display: flex; flex-direction: column; justify-content: space-between; padding: 1px; background: linear-gradient(135deg, #ddd 49%, #bbb 50%, #ddd 52%); color: #888; font: 700 9px/11px "Liberation Sans", sans-serif; }
.flat span + span { align-self: flex-end; }
.usage { position: absolute; right: 4px; bottom: 0; width: 130px; font-size: 12px; line-height: 17px; font-weight: 300; }
.usage p { color: #555; white-space: nowrap; }
.limit { display: grid; grid-template-columns: 29px 68px 1fr; align-items: center; white-space: nowrap; }
.pct { text-align: right; }
.meter { height: 13px; background: linear-gradient(#b8b8b8, #f2f2f2 25%, #ececec 70%, #aaa); }
.meter div { height: 100%; background: linear-gradient(#8fae5a, #bdf05c 20%, #c6f070 75%, #8aa65a); }

.status { flex: none; height: 22px; border-top: 1px solid #c4c4c4; background: #f2f0ee; }

.dialog { position: absolute; left: 392px; top: 368px; width: 981px; border: 1px solid #6a6a6a; background: #f0f0f0; }
.dhead { display: flex; justify-content: space-between; align-items: center; height: 30px; padding: 0 9px 0 8px; background: #fff; }
.dhead h2 { font: 11px/16px "Noto Sans", sans-serif; }
.dbody { display: flex; flex-direction: column; gap: 9px; padding: 12px 20px 3px 4px; }
.frame { border: 1px solid #000; background: #fff; padding-bottom: 4px; }
table { border-collapse: collapse; table-layout: fixed; width: 100%; }
th { height: 21px; padding: 0; font-weight: 400; border-right: 1px solid #e0e0e0; border-bottom: 1px solid #999; }
td { height: 22px; padding: 0 3px; border: 1px solid #999; white-space: nowrap; }
td.off { color: #7d868f; background: #f7f7f7; }
.gzt th:nth-child(1) { width: 118px; } .gzt th:nth-child(2) { width: 261px; } .gzt th:nth-child(3) { width: 141px; } .gzt th:nth-child(4) { width: 159px; } .gzt th:nth-child(5) { width: 116px; } .gzt th:nth-child(7) { width: 41px; }
.gzg th:nth-child(1) { width: 201px; } .gzg th:nth-child(2) { width: 155px; } .gzg th:nth-child(3) { width: 159px; } .gzg th:nth-child(4) { width: 197px; } .gzg th:nth-child(6) { width: 41px; }
.use { display: flex; justify-content: space-between; align-items: center; padding-left: 2px; }
.bar { width: 90px; height: 13px; background: #ffffee; border: solid #ddd; border-width: 0 1px 1px 0; }
.bar div { height: 12px; background: linear-gradient(#4d8c4d, #0d6b10); }
.sunken { height: 20px; border: 1px solid #fff; border-top: 2px solid #6d6d6d; border-left: 2px solid #777; }
</style>
